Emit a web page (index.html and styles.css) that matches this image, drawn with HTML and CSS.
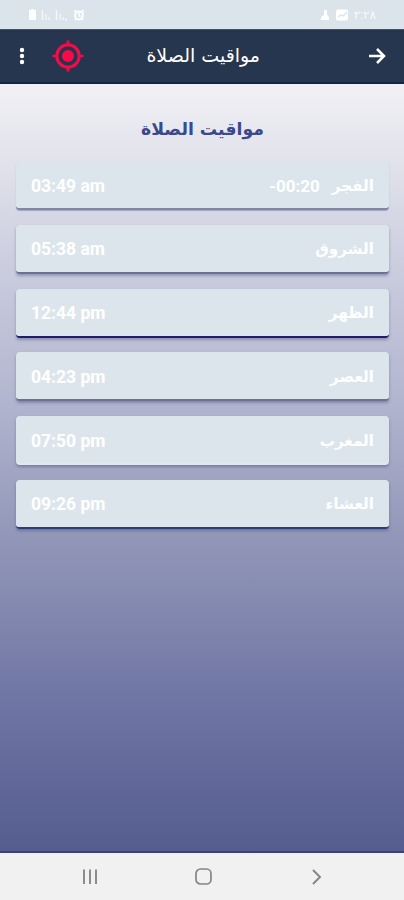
FILE: index.html
```
<!DOCTYPE html>
<html lang="ar" dir="rtl">
<head>
    <meta charset="UTF-8">
    <meta name="viewport" content="width=device-width, initial-scale=1.0">
    <title>مواقيت الصلاة</title>
    <link rel="stylesheet" href="styles.css">
</head>
<body>
    <div class="screen">
        <div class="status-bar">
            <div class="status-group">
                <span class="clock">٢:٢٨</span>
                <svg width="14" height="12" viewBox="0 0 14 12">
                    <rect x="1" y="0.5" width="12" height="11" rx="2" fill="#fff"/>
                    <path d="M3 8l3-2 2 1 4-4" fill="none" stroke="#dce4eb" stroke-width="1.4"/>
                </svg>
                <svg width="10" height="12" viewBox="0 0 10 12">
                    <path d="M4 1h3v5l2 2v3H1V8l3-2z" fill="#fff"/>
                </svg>
            </div>
            <div class="status-group icons">
                <svg width="12" height="12" viewBox="0 0 12 12">
                    <circle cx="6" cy="6.5" r="3.9" fill="none" stroke="#fff" stroke-width="2"/>
                    <path d="M1 3l2-2M11 3L9 1M2 11l1-1M10 11l-1-1M6 4v3h2" fill="none" stroke="#fff" stroke-width="1.5"/>
                </svg>
                <svg width="28" height="12" viewBox="0 0 28 12">
                    <path d="M1.5 1v10M5 5v6M8 8v3M15.5 1v10M19 5v6M22 8v3M24 10.5h2" fill="none" stroke="#fff" stroke-opacity=".7" stroke-width="1.4"/>
                </svg>
                <svg width="9" height="12" viewBox="0 0 9 12">
                    <path d="M3 0h3v1h2v10H1V1h2z" fill="#fff"/>
                </svg>
            </div>
        </div>

        <header class="toolbar">
            <svg class="back" width="18" height="18" viewBox="0 0 18 18">
                <path d="M1 9h14M9 2l7 7-7 7" fill="none" stroke="#fff" stroke-width="2.5"/>
            </svg>
            <h1>مواقيت الصلاة</h1>
            <svg class="target" width="32" height="32" viewBox="0 0 32 32">
                <circle cx="16" cy="16" r="11.2" fill="none" stroke="#f80a48" stroke-width="3"/>
                <circle cx="16" cy="16" r="6" fill="#f80a48"/>
                <path d="M16 0.5v5M16 26.5v5M0.5 16h5M26.5 16h5" stroke="#f80a48" stroke-width="2.6"/>
            </svg>
            <svg class="menu" width="6" height="18" viewBox="0 0 6 18">
                <circle cx="3" cy="3" r="2.2" fill="#fff"/>
                <circle cx="3" cy="9" r="2.2" fill="#fff"/>
                <circle cx="3" cy="15" r="2.2" fill="#fff"/>
            </svg>
        </header>

        <main class="content">
            <h2>مواقيت الصلاة</h2>
            <div class="times">
                <div class="prayer next">
                    <span class="name">الفجر</span>
                    <span class="remaining" dir="ltr">-00:20</span>
                    <span class="time" dir="ltr">03:49 am</span>
                </div>
                <div class="prayer muted">
                    <span class="name">الشروق</span>
                    <span class="time" dir="ltr">05:38 am</span>
                </div>
                <div class="prayer dark">
                    <span class="name">الظهر</span>
                    <span class="time" dir="ltr">12:44 pm</span>
                </div>
                <div class="prayer muted">
                    <span class="name">العصر</span>
                    <span class="time" dir="ltr">04:23 pm</span>
                </div>
                <div class="prayer">
                    <span class="name">المغرب</span>
                    <span class="time" dir="ltr">07:50 pm</span>
                </div>
                <div class="prayer blue">
                    <span class="name">العشاء</span>
                    <span class="time" dir="ltr">09:26 pm</span>
                </div>
            </div>
        </main>

        <nav class="nav-bar">
            <svg width="20" height="20" viewBox="0 0 20 20">
                <path d="M6 3l7 7-7 7" fill="none" stroke="#858585" stroke-width="1.9"/>
            </svg>
            <svg width="20" height="20" viewBox="0 0 20 20">
                <rect x="2" y="2" width="15" height="15" rx="4.5" fill="none" stroke="#858585" stroke-width="1.7"/>
            </svg>
            <svg width="20" height="20" viewBox="0 0 20 20">
                <path d="M4 2.500v14.500M10 2.500v14.500M16 2.500v14.500" fill="none" stroke="#8c8c8c" stroke-width="2"/>
            </svg>
        </nav>
    </div>
</body>
</html>
```
FILE: styles.css
```
* {
    box-sizing: border-box;
}

body {
    margin: 0;
    font-family: Roboto, "DejaVu Sans", sans-serif;
}

.screen {
    display: flex;
    flex-direction: column;
    height: 900px;
}

.status-bar {
    display: flex;
    justify-content: space-between;
    align-items: center;
    height: 29px;
    padding: 1px 28px 0;
    background-color: #dce4eb;
}

.status-group {
    display: flex;
    align-items: center;
    gap: 5px;
}

.status-group.icons {
    gap: 4px;
}

.clock {
    color: #f8fafc;
    font-size: 12px;
}

.toolbar {
    display: flex;
    align-items: center;
    height: 55px;
    padding: 0 18px 0 19px;
    background-color: #26364f;
    border-top: 1px solid #435066;
    border-bottom: 2px solid #10264a;
}

.toolbar h1 {
    flex: none;
    margin: 0 108px 2px 0;
    color: #fff;
    font-family: "DejaVu Sans", sans-serif;
    font-size: 19px;
    font-weight: normal;
}

.target {
    margin-right: auto;
}

.menu {
    margin-right: 27px;
}

.content {
    flex: 1;
    padding: 33px 15px 0 16px;
    background: linear-gradient(#f1f1f5 0%, #e3e4ec 9%, #c9cbde 25%, #b0b4ce 42%, #9499ba 58%, #7076a4 80%, #555c8f 100%);
    border-bottom: 2px solid #36457d;
}

.content h2 {
    margin: 0;
    height: 44px;
    color: #3d478b;
    font-family: "DejaVu Sans", sans-serif;
    font-size: 17.3px;
    line-height: 24px;
    text-align: center;
}

.times {
    display: flex;
    flex-direction: column;
    gap: 14.8px;
}

.prayer {
    display: flex;
    align-items: center;
    height: 49px;
    padding: 2px 15px 0;
    background-color: #dde5ec;
    border-bottom: 2px solid #e2e7f2;
    border-radius: 4px;
    box-shadow: 0 2px 3px rgba(50, 50, 90, 0.35);
    color: #fff;
    font-size: 17.5px;
    font-weight: bold;
}

.prayer.next {
    border-bottom-color: #8087a8;
    box-shadow: 0 1px 1px rgba(50, 50, 90, 0.3);
}

.prayer.muted {
    border-bottom-color: #6a7096;
}

.prayer.dark {
    border-bottom-color: #1d1c70;
}

.prayer.blue {
    border-bottom-color: #293c7c;
}

.name {
    font-family: "DejaVu Sans", sans-serif;
    font-size: 15.2px;
}

.remaining {
    margin-right: 12px;
    font-size: 17px;
}

.time {
    margin-right: auto;
}

.nav-bar {
    display: flex;
    justify-content: space-between;
    align-items: center;
    height: 47px;
    padding: 0 77px 0 80px;
    background-color: #f1f1f1;
}
```
